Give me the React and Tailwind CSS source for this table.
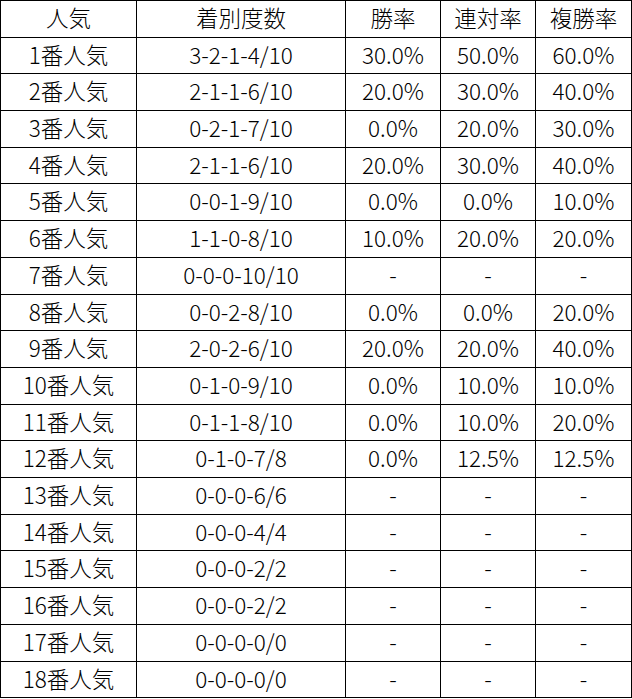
import React from 'react';

const rows = [
  ['1番人気', '3-2-1-4/10', '30.0%', '50.0%', '60.0%'],
  ['2番人気', '2-1-1-6/10', '20.0%', '30.0%', '40.0%'],
  ['3番人気', '0-2-1-7/10', '0.0%', '20.0%', '30.0%'],
  ['4番人気', '2-1-1-6/10', '20.0%', '30.0%', '40.0%'],
  ['5番人気', '0-0-1-9/10', '0.0%', '0.0%', '10.0%'],
  ['6番人気', '1-1-0-8/10', '10.0%', '20.0%', '20.0%'],
  ['7番人気', '0-0-0-10/10', '-', '-', '-'],
  ['8番人気', '0-0-2-8/10', '0.0%', '0.0%', '20.0%'],
  ['9番人気', '2-0-2-6/10', '20.0%', '20.0%', '40.0%'],
  ['10番人気', '0-1-0-9/10', '0.0%', '10.0%', '10.0%'],
  ['11番人気', '0-1-1-8/10', '0.0%', '10.0%', '20.0%'],
  ['12番人気', '0-1-0-7/8', '0.0%', '12.5%', '12.5%'],
  ['13番人気', '0-0-0-6/6', '-', '-', '-'],
  ['14番人気', '0-0-0-4/4', '-', '-', '-'],
  ['15番人気', '0-0-0-2/2', '-', '-', '-'],
  ['16番人気', '0-0-0-2/2', '-', '-', '-'],
  ['17番人気', '0-0-0-0/0', '-', '-', '-'],
  ['18番人気', '0-0-0-0/0', '-', '-', '-'],
];

// row pitch alternates 37/36 to land on the reference's grid lines
const heights = [37, 36, 37, 37, 36, 37, 37, 37, 36, 37, 37, 36, 37, 37, 36, 37, 37, 37, 36];
const rowClass = { 37: 'h-[37px]', 36: 'h-[36px]' };

function Row({ cells, h }) {
  return (
    <div className={`grid grid-cols-[136px_209px_95px_95px_96px] ${rowClass[h]}`}>
      {cells.map((c, i) => (
        <div key={i} className="flex items-center justify-center pb-[3px] border-r border-b border-black">
          {c}
        </div>
      ))}
    </div>
  );
}

export default function App() {
  return (
    <div className="w-[632px] h-[699px] bg-white">
      <div
        className="w-[632px] border-t border-l border-black text-black text-[22.5px] font-light leading-none"
        style={{ fontFamily: '"Noto Sans CJK JP", "Noto Sans", sans-serif' }}
      >
        <Row cells={['人気', '着別度数', '勝率', '連対率', '複勝率']} h={heights[0]} />
        {rows.map((r, i) => (
          <Row key={i} cells={r} h={heights[i + 1]} />
        ))}
      </div>
    </div>
  );
}
